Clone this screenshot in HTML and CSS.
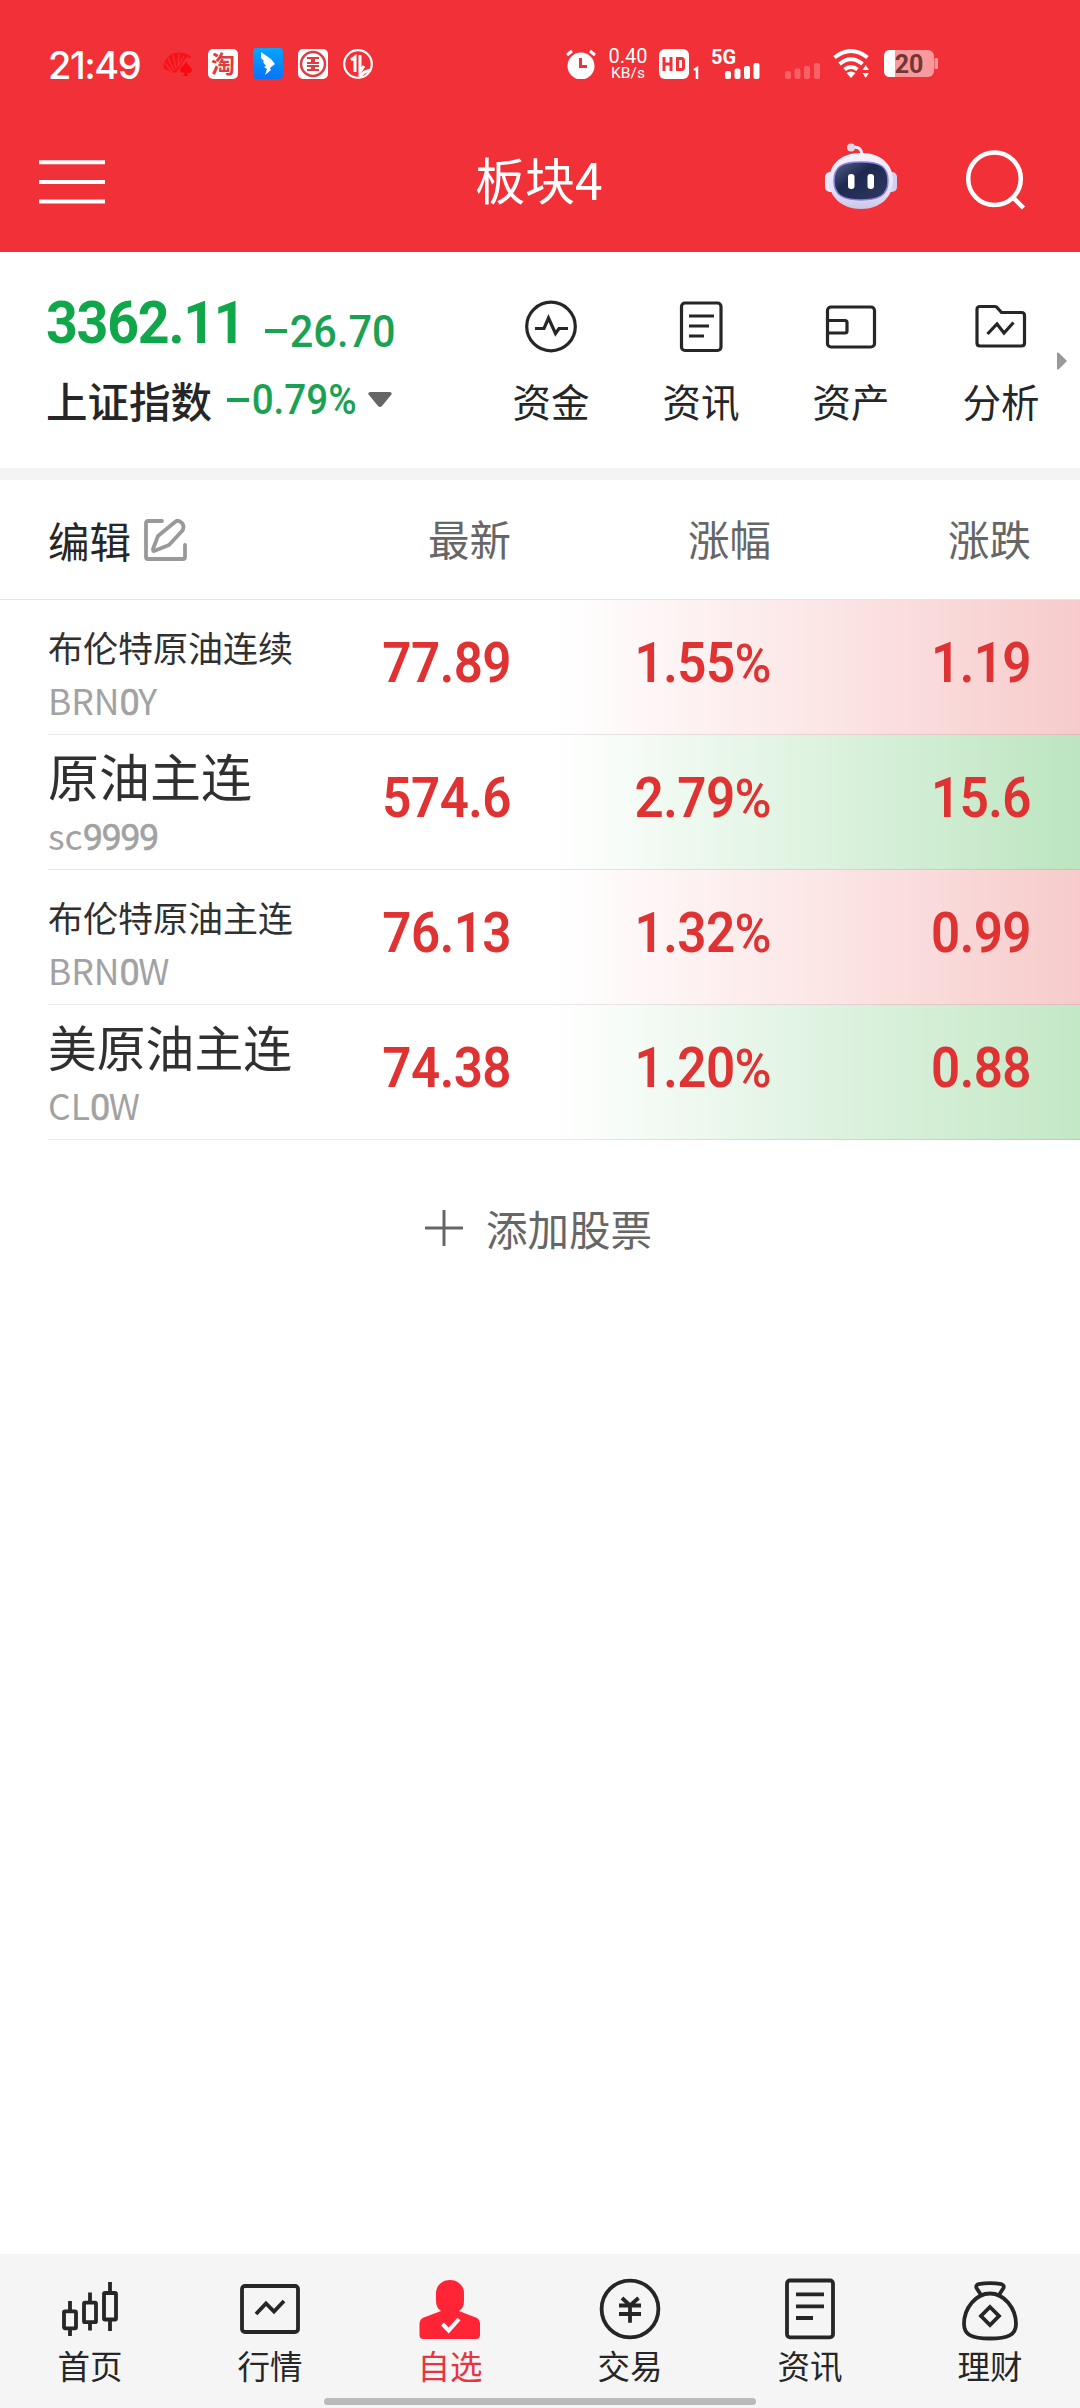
FILE: index.html
```html
<!DOCTYPE html>
<html lang="zh-CN">
<head>
<meta charset="utf-8">
<title>板块4</title>
<link rel="stylesheet" href="styles.css">
</head>
<body>
<div class="app">
  <header class="top">
    <div class="status">
      <div class="status-left">
        <span class="clock">21:49</span>
        <svg class="app-ico" viewBox="0 0 30 32"><g fill="#fb0710"><path d="M1 21C-1 12 8 3 18 5c5 0 9 2 11 5l-4-1-3 2-5 8-4 6-7-2z" opacity=".75"/><path d="M23 13c1 4 6 6 6 9 0 3-4 4-5 2l1 4h-5l2-4c-2 2-5 0-5-2 0-3 5-5 6-9z"/></g><path d="M2 15l7 9M5 10l6 13M10 7l3 14M16 6l-1 13M21 8l-5 9" stroke="#f13037" stroke-width="1.5" fill="none"/></svg>
        <svg class="app-ico" viewBox="0 0 30 32"><rect y="1" width="30" height="30" rx="5" fill="#fff"/><text x="15" y="24.500" class="tao">淘</text></svg>
        <svg class="app-ico" viewBox="0 0 30 32"><defs><linearGradient id="sky" x2="0" y2="1"><stop stop-color="#08a4ff"/><stop offset="1" stop-color="#0873f5"/></linearGradient></defs><rect width="30" height="31" rx="4" fill="url(#sky)"/><path d="M8 4l10 7 4 5-5 4 1 2-6 5 2-6-3-2 2-1-3-4 1-1-3-3z" fill="#fff"/></svg>
        <svg class="app-ico" viewBox="0 0 30 32"><rect y="1" width="30" height="30" rx="5" fill="#fff"/><g fill="none" stroke="#dc3c42"><circle cx="15" cy="16" r="12" stroke-width="2.500"/><path d="M9 10h5v5H9M21 10h-5v5h5M9 22h5v-4H9M21 22h-5v-4h5" stroke-width="2"/></g></svg>
        <svg class="app-ico" viewBox="0 0 30 32"><g fill="none" stroke="#fff"><circle cx="15" cy="16" r="13.800" stroke-width="2.200"/><path d="M8 12l4-3v15M17 7v17l4-6" stroke-width="3"/><path d="M17 29q3-6 11-7" stroke-width="3"/></g></svg>
      </div>
      <div class="status-right">
        <svg class="alarm" viewBox="0 0 30 30"><circle cx="15" cy="17" r="13.500" fill="#fff"/><path d="M1 6l5-4M29 6l-5-4" stroke="#fff" stroke-width="3"/><path d="M14.500 9v8.500H21" stroke="#f13037" stroke-width="3" fill="none"/></svg>
        <div class="speed"><span>0.40</span><span class="unit">KB/s</span></div>
        <svg class="hd" viewBox="0 0 42 30"><rect width="30" height="30" rx="6" fill="#fff"/><path d="M5 8v14M12 8v14M5 15h7M18.500 9.500v11M17 9.500h5.500q2 0 2 2v7q0 2-2 2H17" stroke="#f13037" stroke-width="3" fill="none"/><path d="M35 21l3-2v11" stroke="#fff" stroke-width="2.500" fill="none"/></svg>
        <svg class="cell" viewBox="0 0 49 30"><text x="-1" y="14.500" class="five-g">5G</text><g fill="#fff"><rect x="13" y="22" width="6" height="8" rx="2"/><rect x="22.500" y="19.500" width="6" height="10.500" rx="2"/><rect x="32" y="17" width="6" height="13" rx="2"/><rect x="41.500" y="14" width="6" height="16" rx="2"/></g></svg>
        <svg class="faint" viewBox="0 0 36 30"><g fill="#fb6066"><rect x="0" y="22" width="6" height="8" rx="2"/><rect x="9.500" y="19.500" width="6" height="10.500" rx="2"/><rect x="19" y="17" width="6" height="13" rx="2"/><rect x="29" y="14" width="6" height="16" rx="2"/></g></svg>
        <svg class="wifi" viewBox="0 0 37 30"><g fill="none" stroke="#fff" stroke-width="4"><path d="M1.500 8.500q16.500-13 33 0M6.500 15q11.500-9.500 23 0M11.500 20.500q6.500-5 13 0"/></g><path d="M13.500 24q4.500-3 9 0L18 29zM29.500 21l3.200-5 3.300 5zM29.500 24l3.200 5 3.300-5z" fill="#fff"/></svg>
        <svg class="battery" viewBox="0 0 54 28"><rect width="50" height="27" rx="6" fill="#fa999c"/><path d="M6 0h5v27H6q-6 0-6-6V6q0-6 6-6z" fill="#fff"/><rect x="50.500" y="8" width="3.500" height="11" rx="1" fill="#fa999c"/><text x="25" y="22.500" class="level">20</text></svg>
      </div>
    </div>
    <div class="titlebar">
      <svg class="menu" viewBox="0 0 66 44"><path d="M0 2.300h66M0 22h66M0 41.500h66" stroke="#fff" stroke-width="4"/></svg>
      <h1>板块4</h1>
      <svg class="robot" viewBox="0 0 72 68">
        <defs><linearGradient id="shell" x2="0" y2="1"><stop stop-color="#f6f3fb"/><stop offset=".7" stop-color="#e4e0f6"/><stop offset="1" stop-color="#c9c7e8"/></linearGradient><linearGradient id="visor" x2="1" y2="1"><stop stop-color="#56608b"/><stop offset=".4" stop-color="#1e2950"/><stop offset="1" stop-color="#303a61"/></linearGradient></defs>
        <path d="M26 5q11-3 11 8" fill="none" stroke="#eee9f5" stroke-width="3"/><circle cx="26" cy="4.500" r="4" fill="#ddd8e8"/>
        <rect y="29" width="12" height="20" rx="5" fill="#eceaf8"/><rect x="60" y="29" width="12" height="20" rx="5" fill="#d3d0ef"/>
        <path d="M36 10c22 0 32 13 32 28S56 66 36 66 4 53 4 38s10-28 32-28z" fill="url(#shell)"/>
        <path d="M36 19c20 0 27 5 27 19s-9 19-27 19S9 52 9 38s7-19 27-19z" fill="url(#visor)" stroke="#8c7fe0" stroke-width="1.500"/>
        <rect x="23" y="31" width="6.500" height="15" rx="3" fill="#fff"/><rect x="42.500" y="31" width="6.500" height="15" rx="3" fill="#fff"/>
      </svg>
      <svg class="search" viewBox="0 0 60 60"><circle cx="28.500" cy="28.700" r="26.300" fill="none" stroke="#fff" stroke-width="4.500"/><path d="M47 47.500l10.500 10.500" stroke="#fff" stroke-width="4.500"/></svg>
    </div>
  </header>

  <section class="summary">
    <div class="index">
      <div class="index-top"><span class="price">3362.11</span><span class="delta"><i class="minus"></i>26.70</span></div>
      <div class="index-bottom"><span class="iname">上证指数</span><span class="pct"><i class="minus"></i>0.79%</span><svg class="caret" viewBox="0 0 24 16"><path d="M2 0h20q3 1 1 3L14 14q-2 2-4 0L1 3Q-1 1 2 0z" fill="#666"/></svg></div>
    </div>
    <nav class="quick">
      <a><svg viewBox="0 0 56 56"><circle cx="28" cy="28.500" r="24.300"/><path d="M12 30.500h9L25.500 20l7 15.500 3.500-5h9"/></svg>资金</a>
      <a><svg viewBox="0 0 56 56"><rect x="8.500" y="5" width="39.500" height="47.500" rx="3.500"/><path d="M16 18h25M16 28h20M16 38h15"/></svg>资讯</a>
      <a><svg viewBox="0 0 56 56"><rect x="4.500" y="9" width="47" height="40" rx="3.500"/><path d="M4.500 22.500H22q2 0 2 2V33q0 2-2 2H4.500"/></svg>资产</a>
      <a><svg viewBox="0 0 56 56"><path d="M7 8.500h15q1.500 0 2.500 1.500l4 4.500h20q3 0 3 3V45q0 3-3 3H7q-3 0-3-3V11.500q0-3 3-3z"/><path d="M14.500 36l9.500-10 7 9 9.500-10.500"/></svg>分析</a>
      <svg class="more" viewBox="0 0 10 18"><path d="M0 1q1-1 2 0l8 8-8 8q-1 1-2 0z" fill="#999"/></svg>
    </nav>
  </section>

  <div class="row head">
    <div class="edit">编辑<svg viewBox="0 0 44 44"><path d="M19 3H5Q3 3 3 5v34q0 2 2 2h35q2 0 2-2V27M32 4q3-3 7 1 3 4 0 8L26 27 11 33q-1 0-1-2l5-13z" fill="none" stroke="#999" stroke-width="3.800" stroke-linecap="round" stroke-linejoin="round"/></svg></div>
    <div>最新</div><div>涨幅</div><div>涨跌</div>
  </div>
  <main>
    <div class="row red"><div class="stock"><b class="name">布伦特原油连续</b><span class="code">BRN<em>0</em>Y</span></div><div class="num">77.89</div><div class="num">1.55<small>%</small></div><div class="num">1.19</div></div>
    <div class="row green"><div class="stock"><b class="name four">原油主连</b><span class="code">sc<em>9999</em></span></div><div class="num">574.6</div><div class="num">2.79<small>%</small></div><div class="num">15.6</div></div>
    <div class="row red"><div class="stock"><b class="name">布伦特原油主连</b><span class="code">BRN<em>0</em>W</span></div><div class="num">76.13</div><div class="num">1.32<small>%</small></div><div class="num">0.99</div></div>
    <div class="row green pale"><div class="stock"><b class="name five">美原油主连</b><span class="code">CL<em>0</em>W</span></div><div class="num">74.38</div><div class="num">1.20<small>%</small></div><div class="num">0.88</div></div>
    <div class="add"><svg viewBox="0 0 38 38"><path d="M19 1v36M0 19h38" stroke="#666" stroke-width="3"/></svg>添加股票</div>
  </main>

  <footer>
    <nav class="tabs">
      <a><svg viewBox="0 0 64 64"><rect x="6" y="34.300" width="12" height="17" rx="1"/><rect x="26" y="25.700" width="12" height="19.500" rx="1"/><rect x="46" y="16" width="12" height="26.500" rx="1"/><path d="M12 24v9M12 52v7M32 15.500V25M32 46v7.500M52 5v10M52 43v11"/></svg>首页</a>
      <a><svg viewBox="0 0 64 64"><rect x="4" y="9" width="56" height="46" rx="3"/><path d="M18 37l10-10.500 8 8L46 24"/></svg>行情</a>
      <a class="active"><svg viewBox="0 0 64 64"><path class="solid" d="M32 3c8 0 14 6 14 13v8q0 7-5 10l18 7q3 2 3 5v12q0 4-4 4H5.500q-4 0-4-4V46q0-3 3-5L23 34q-5-3-5-10v-8C18 9 24 3 32 3z"/><path class="tick" d="M24.500 47l6.200 6.500L41 42"/></svg>自选</a>
      <a><svg viewBox="0 0 64 64"><circle cx="32" cy="32" r="28.400"/><path d="M24 21l8 7.500 8.500-7.500M21 28.500h22M21 37h22M32 28v17.700"/></svg>交易</a>
      <a><svg viewBox="0 0 64 64"><rect x="9" y="3.500" width="46" height="56.800" rx="3"/><path d="M18 17.300h28M18 29.300h28M18 41h17"/></svg>资讯</a>
      <a><svg viewBox="0 0 64 64"><path d="M32 16.500C18 16.500 6 31 6 47c0 11 8 14.500 26 14.500S58 58 58 47C58 31 46 16.500 32 16.500zM23 18l-4.500-7q-1-3 2-3.800 11.500-2 23 0 3 1 2 3.800L41 18M32 30l9 9-9 9-9-9z"/></svg>理财</a>
    </nav>
    <div class="home-bar"></div>
  </footer>
</div>
</body>
</html>
```
FILE: styles.css
```css
* { box-sizing: border-box; }
body { margin: 0; background: #fff; }
.app { width: 1080px; height: 2408px; display: flex; flex-direction: column; overflow: hidden;
  font-family: "Noto Sans CJK SC", sans-serif; color: #262626; }
svg { display: block; flex: none; }
i, em, b, small { font-style: normal; font-weight: inherit; }

.top { height: 252px; background: #f13037; color: #fff; }
.status { height: 110px; padding: 18px 142px 0 48px; display: flex; justify-content: space-between; }
.status-left, .status-right { display: flex; align-items: center; height: 92px; }
.clock { width: 115px; font: 500 38px/44px "Inter", sans-serif; letter-spacing: -1.500px; padding-top: 2px; }
.app-ico { width: 30px; height: 32px; margin-right: 15px; overflow: visible; }
.tao { font: 700 24px "Noto Sans CJK SC", sans-serif; text-anchor: middle; fill: #dc3c42; }
.alarm { width: 30px; height: 30px; }
.speed { width: 40px; margin-left: 12px; display: flex; flex-direction: column; align-items: center; gap: 1px; font: 400 20px/18px "Roboto", sans-serif; }
.unit { font-size: 15.500px; line-height: 15px; }
.hd { width: 42px; height: 30px; margin-left: 11px; }
.cell { width: 49px; height: 30px; margin-left: 11px; overflow: visible; }
.five-g { font: 700 20px "Roboto", sans-serif; fill: #fff; }
.faint { width: 36px; height: 30px; margin-left: 24px; }
.wifi { width: 37px; height: 30px; margin-left: 12px; }
.battery { width: 54px; height: 28px; margin-left: 14px; }
.level { font: 700 25px "Roboto", sans-serif; text-anchor: middle; fill: #713638; }

.titlebar { height: 142px; display: grid; grid-template-columns: 66px 1fr 72px 69px 60px; padding: 0 54px 0 39px; }
.menu { width: 66px; height: 44px; margin-top: 50px; }
.titlebar h1 { margin: 0 0 0 284px; width: 300px; text-align: center; font-weight: 400; font-size: 50px; line-height: 60px; padding-top: 38px; }
.robot { width: 72px; height: 68px; margin-top: 33px; }
.search { width: 60px; height: 60px; margin-top: 40px; grid-column: 5; }

.summary { height: 228px; border-bottom: 12px solid #f4f4f4; display: flex; }
.index { width: 476px; padding: 42px 0 0 46px; }
.index-top { display: flex; height: 62px; color: #10a64a; font-family: "Roboto", sans-serif; }
.price { width: 219px; font-weight: 700; font-size: 59px; line-height: 58px; letter-spacing: -1.300px; transform: scaleX(.94); transform-origin: left; }
.delta, .pct { display: flex; align-items: center; font-weight: 500; color: #1aa252; transform: scaleX(.92); transform-origin: left; }
.delta { font-size: 45px; height: 74px; }
.minus { width: 24px; height: 4px; background: currentColor; margin-right: 3px; }
.index-bottom { display: flex; align-items: center; height: 80px; margin-top: 4px; }
.iname { font-size: 41.500px; font-weight: 500; width: 181px; line-height: 60px; white-space: nowrap; }
.pct { width: 141px; font: 500 42px/50px "Roboto", sans-serif; }
.caret { width: 24px; height: 16px; }
.quick { display: flex; position: relative; }
.quick a { width: 150px; display: flex; flex-direction: column; align-items: center; padding-top: 46px; font-size: 38.500px; line-height: 50px; gap: 21px; }
.quick a svg { width: 56px; height: 56px; }
.quick a svg, .tabs svg { fill: none; stroke: #262626; stroke-width: 3.200; }
.more { position: absolute; left: 581px; top: 100px; width: 10px; height: 18px; }

.row { height: 135px; display: grid; grid-template-columns: 262px 201px 260px 260px; margin-left: 48px; border-bottom: 1px solid rgba(0,0,0,.09); text-align: right; }
.head { height: 120px; flex: none; margin: 0; padding-left: 48px; font-size: 41.500px; line-height: 116px; color: #666; border-color: #e6e6e6; }
.edit { display: flex; align-items: center; color: #262626; gap: 12px; }
.edit svg { width: 44px; height: 44px; }
.stock { display: flex; flex-direction: column; text-align: left; white-space: nowrap; }
.name { height: 82px; line-height: 94px; font-size: 35px; color: #303030; }
.four { font-size: 51px; line-height: 81px; }
.five { font-size: 48.800px; line-height: 82px; }
.code { font-size: 35.500px; line-height: 36px; color: #a2a2a2; }
.code em { font-family: "Roboto", sans-serif; font-size: 36px; font-weight: 400; letter-spacing: -1.500px; -webkit-text-stroke: .6px; }
.num { font: 600 55px/127px "Roboto", sans-serif; letter-spacing: -.6px; color: #df3333; transform: scaleX(.93); transform-origin: right; }
.num small { font-size: 54px; font-weight: 500; }
.red { background: linear-gradient(90deg, #fff 506px, #fce7e7 762px, #f7cbcb); }
.green { background: linear-gradient(90deg, #fff 506px, #dcf2de 782px, #bce5c0); }
.pale { background: linear-gradient(90deg, #fff 506px, #def2e0 782px, #c3e8c6); }
.add { margin-top: 58px; padding-right: 3px; display: flex; align-items: center; justify-content: center; gap: 23px; height: 60px; color: #666; font-size: 41.500px; line-height: 60px; }
.add svg { width: 38px; height: 38px; }

footer { margin-top: auto; height: 154px; background: #f5f5f5; display: flex; flex-direction: column; align-items: center; }
.tabs { display: flex; height: 144px; }
.tabs a { width: 180px; display: flex; flex-direction: column; align-items: center; padding-top: 23px; font-size: 32.500px; line-height: 48px; }
.tabs svg { width: 64px; height: 64px; stroke-width: 3.800; }
.tabs .active { color: #ea3341; }
.tabs .solid { fill: #ff2536; stroke: none; }
.tabs .tick { stroke: #fff; stroke-width: 4; }
.home-bar { width: 432px; height: 7px; border-radius: 4px; background: #bababa; }
```
